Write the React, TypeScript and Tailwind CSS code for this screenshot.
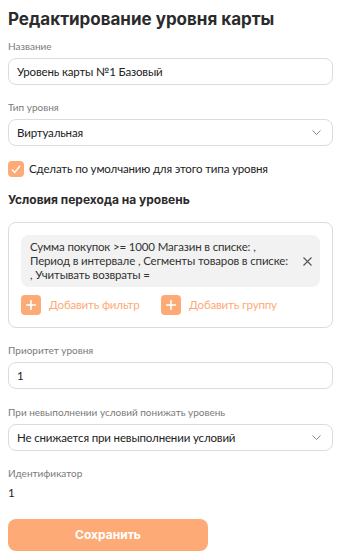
const body = "font-['Lato','Open_Sans',sans-serif]";
const txt = "text-[11.5px] tracking-[-0.15px]";

function Label({ children }: { children: React.ReactNode }) {
  return <div className="mb-[5px] text-[10px] leading-[13px] text-[#7a7a7a]">{children}</div>;
}

function Chevron() {
  return (
    <svg width="9" height="5" viewBox="0 0 9 5" fill="none" className="text-[#8a8a8a]">
      <path d="M0.5 0.5 L4.5 4.5 L8.5 0.5" stroke="currentColor" strokeWidth="1" />
    </svg>
  );
}

function Field({ children, select = false }: { children: React.ReactNode; select?: boolean }) {
  return (
    <div className={`flex h-[27px] items-center justify-between rounded-[8px] border border-[#dcdcdc] bg-white pl-[8px] pr-[11px] leading-[16px] text-[#222] ${txt}`}>
      <span>{children}</span>
      {select && <Chevron />}
    </div>
  );
}

function AddButton({ text, className = "" }: { text: string; className?: string }) {
  return (
    <div className={`flex items-center gap-[8px] ${className}`}>
      <div className="flex h-[20px] w-[20px] items-center justify-center rounded-[4px] bg-[#fdaa76]">
        <svg width="10" height="10" viewBox="0 0 10 10">
          <path d="M5 0 V10 M0 5 H10" stroke="#fff" strokeWidth="1.6" />
        </svg>
      </div>
      <span className={`leading-[16px] text-[#fdaa76] ${txt}`}>{text}</span>
    </div>
  );
}

export default function App() {
  return (
    <div className={`min-h-[560px] w-[341px] bg-white px-[8px] pt-[8px] ${body}`}>
      <h1 className="font-['Inter',sans-serif] text-[17px] font-bold leading-[22px] text-[#2b2b2b]">
        Редактирование уровня карты
      </h1>

      <div className="mt-[10px]">
        <Label>Название</Label>
        <Field>Уровень карты №1 Базовый</Field>
      </div>

      <div className="mt-[16px]">
        <Label>Тип уровня</Label>
        <Field select>Виртуальная</Field>
      </div>

      <div className="mt-[15px] flex items-center gap-[5px]">
        <div className="flex h-[16px] w-[16px] items-center justify-center rounded-[4px] bg-[#fdaa76]">
          <svg width="10" height="9" viewBox="0 0 10 9" fill="none">
            <path d="M1 4.5 L3.8 7.5 L9 0.8" stroke="#fff" strokeWidth="1.4" />
          </svg>
        </div>
        <span className={`leading-[16px] text-[#222] ${txt}`}>Сделать по умолчанию для этого типа уровня</span>
      </div>

      <div className="mt-[15px] font-['Inter',sans-serif] text-[12px] font-bold leading-[16px] text-[#2b2b2b]">
        Условия перехода на уровень
      </div>

      <div className="mt-[14px] rounded-[8px] border border-[#dcdcdc] px-[12px] pb-[12px] pt-[12px]">
        <div className="flex items-center rounded-[8px] bg-[#f2f2f2] pb-[5px] pl-[9px] pr-[8px] pt-[5px]">
          <div className={`flex-1 whitespace-nowrap leading-[14px] text-[#333] ${txt}`}>
            Сумма покупок &gt;= 1000 Магазин в списке: ,
            <br />
            Период в интервале , Сегменты товаров в списке:
            <br />, Учитывать возвраты =
          </div>
          <svg width="9" height="9" viewBox="0 0 9 9" className="ml-[6px]">
            <path d="M0.5 0.5 L8.5 8.5 M8.5 0.5 L0.5 8.5" stroke="#555" strokeWidth="1.1" />
          </svg>
        </div>
        <div className="mt-[8px] flex">
          <AddButton text="Добавить фильтр" className="w-[140px]" />
          <AddButton text="Добавить группу" />
        </div>
      </div>

      <div className="mt-[16px]">
        <Label>Приоритет уровня</Label>
        <Field>1</Field>
      </div>

      <div className="mt-[17px]">
        <Label>При невыполнении условий понижать уровень</Label>
        <Field select>Не снижается при невыполнении условий</Field>
      </div>

      <div className="mt-[16px]">
        <Label>Идентификатор</Label>
        <div className={`leading-[16px] text-[#222] ${txt}`}>1</div>
      </div>

      <button className="mt-[18px] h-[32px] w-[200px] rounded-[8px] bg-[#fdaa76] font-['Inter',sans-serif] text-[12px] font-bold text-white">
        Сохранить
      </button>
    </div>
  );
}
